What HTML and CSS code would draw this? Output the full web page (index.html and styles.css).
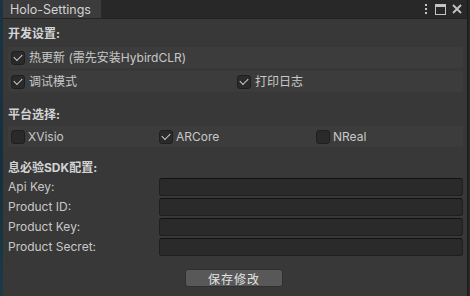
FILE: index.html
```html
<!DOCTYPE html>
<html lang="zh">
<head>
<meta charset="UTF-8">
<title>Holo-Settings</title>
<link rel="stylesheet" href="styles.css">
</head>
<body>
<div class="edge-left"></div>

<div class="window">
  <!-- tab bar -->
  <div class="tabbar">
    <div class="tab">Holo-Settings</div>
    <div class="tools">
      <svg class="ico" width="6" height="12" viewBox="0 0 6 12"><rect x="2" y="1" width="2" height="2"/><rect x="2" y="5" width="2" height="2"/><rect x="2" y="9" width="2" height="2"/></svg>
      <svg class="ico" width="11" height="11" viewBox="0 0 11 11"><rect x="0.5" y="0.5" width="10" height="10" fill="none" stroke="#c4c4c4"/><rect x="0" y="0" width="11" height="3"/></svg>
      <svg class="ico" width="10" height="10" viewBox="0 0 10 10"><path d="M1 1L9 9M9 1L1 9" stroke="#c4c4c4" stroke-width="1.8" fill="none"/></svg>
    </div>
  </div>

  <div class="content">
    <h2>开发设置:</h2>
    <div class="band">
      <label class="tg"><span class="cb on"></span>热更新 (需先安装HybirdCLR)</label>
    </div>
    <div class="band two">
      <label class="tg"><span class="cb on"></span>调试模式</label>
      <label class="tg"><span class="cb on"></span>打印日志</label>
    </div>

    <h2 class="gap">平台选择:</h2>
    <div class="band three">
      <label class="tg"><span class="cb"></span>XVisio</label>
      <label class="tg"><span class="cb on"></span>ARCore</label>
      <label class="tg"><span class="cb"></span>NReal</label>
    </div>

    <h2 class="gap2">息必验SDK配置:</h2>
    <div class="fields">
      <span>Api Key:</span><div class="inp"></div>
      <span>Product ID:</span><div class="inp"></div>
      <span>Product Key:</span><div class="inp"></div>
      <span>Product Secret:</span><div class="inp"></div>
    </div>

    <div class="actions"><button>保存修改</button></div>
  </div>
</div>

<div class="edge-right"></div>
</body>
</html>
```

FILE: styles.css
```css
:root{
  --bg:#383838;
  --band:#3c3c3c;
  --text:#c8c8c8;
  --field:#2a2a2a;
  font-family:Inter,"Noto Sans CJK SC",sans-serif;
  font-size:12px;
}
*{box-sizing:border-box;margin:0;padding:0}
body{width:470px;height:296px;display:flex;overflow:hidden;background:#1f1f1f;color:var(--text)}

.edge-left{width:3px;background:linear-gradient(#1c3442,#14303c 60%,#1d3a48)}
.edge-right{width:3px;background:#262626;border-left:1px solid #1a1a1a}
.window{width:464px;display:flex;flex-direction:column;background:var(--bg)}

/* ── tab bar ── */
.tabbar{height:19px;background:#282828;display:flex;align-items:stretch;border-bottom:1px solid #232323}
.tab{width:98px;background:#3c3c3c;padding:0 7px;font-size:12.5px;line-height:19px;color:#d2d2d2;white-space:nowrap}
.tools{margin-left:auto;display:flex;align-items:center;gap:6px;padding-right:5px}
.ico{fill:#c4c4c4;display:block}

/* ── content ── */
.content{padding:7px 4px 0 5px;display:flex;flex-direction:column}
h2{font-size:12px;font-weight:700;line-height:16px;color:#d4d4d4;margin-bottom:5px}
h2.gap{margin-top:15px;margin-bottom:3px}
h2.gap2{margin-top:13px;margin-bottom:2px}

.band{height:21px;background:var(--band);display:grid;align-items:center;padding-left:3px}
.band + .band{margin-top:3px}
.band.two{grid-template-columns:226px 1fr}
.band.three{grid-template-columns:148px 157px 1fr}
.tg{display:flex;align-items:center;gap:4px;line-height:14px;white-space:nowrap}
.cb{width:14px;height:14px;border-radius:3px;background:#2a2a2a;border:1px solid #1f1f1f;display:flex;align-items:center;justify-content:center}
.cb.on::after{
  content:"";width:7px;height:4px;margin-top:-2px;
  border-left:1.6px solid #d0d0d0;border-bottom:1.6px solid #d0d0d0;transform:rotate(-45deg)
}
.three .tg{gap:3px}

.fields{display:grid;grid-template-columns:151px 1fr;row-gap:2px;align-items:center}
.fields span{line-height:18px}
.inp{height:18px;background:var(--field);border:1px solid #1f1f1f;border-top-color:#121212;border-radius:3px}

.actions{display:flex;padding:13px 0 0 177px}
button{width:98px;height:18px;background:#585858;border:1px solid #303030;border-radius:3px;color:#e2e2e2;font:12px "Noto Sans CJK SC",sans-serif;letter-spacing:1px}
```
